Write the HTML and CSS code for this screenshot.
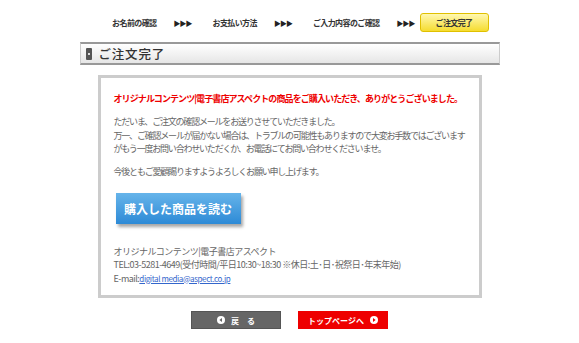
FILE: index.html
```html
<!DOCTYPE html>
<html lang="ja">

<head>
    <meta charset="UTF-8">
    <title>ご注文完了</title>
    <link rel="stylesheet" href="styles.css">
</head>

<body>
    <div class="page">
        <!-- ステップ表示 -->
        <div class="steps">
            <span class="step">お名前の確認</span>
            <span class="arrow">▶▶▶</span>
            <span class="step">お支払い方法</span>
            <span class="arrow">▶▶▶</span>
            <span class="step">ご入力内容のご確認</span>
            <span class="arrow last">▶▶▶</span>
            <span class="step current">ご注文完了</span>
        </div>

        <h1 class="title"><span class="mark"></span>ご注文完了</h1>

        <div class="box">
            <p class="thanks">オリジナルコンテンツ|電子書店アスペクトの商品をご購入いただき、ありがとうございました。</p>
            <p class="text">ただいま、ご注文の確認メールをお送りさせていただきました。<br>
                万一、ご確認メールが届かない場合は、トラブルの可能性もありますので大変お手数ではございます<br>
                がもう一度お問い合わせいただくか、お電話にてお問い合わせくださいませ。</p>
            <p class="text">今後ともご愛顧賜りますようよろしくお願い申し上げます。</p>
            <a class="read-btn" href="#">購入した商品を読む</a>
            <p class="text contact">オリジナルコンテンツ|電子書店アスペクト<br>
                TEL:03-5281-4649(受付時間/平日10:30~18:30 ※休日:土･日･祝祭日･年末年始)<br>
                E-mail:<a href="#">digital media@aspect.co.jp</a></p>
        </div>

        <div class="buttons">
            <a class="btn back" href="#">
                <svg width="8" height="8" viewBox="0 0 8 8"><circle cx="4" cy="4" r="4" fill="#fff"/><path d="M5 2 L2.4 4 L5 6 Z" fill="#666"/></svg>
                <span>戻　る</span>
            </a>
            <a class="btn top" href="#">
                <span>トップページへ</span>
                <svg width="8" height="8" viewBox="0 0 8 8"><circle cx="4" cy="4" r="4" fill="#fff"/><path d="M3 2 L5.6 4 L3 6 Z" fill="#e00"/></svg>
            </a>
        </div>
    </div>
</body>

</html>
```

FILE: styles.css
```css
body {
    margin: 0;
    background-color: #fff;
    font-family: "Noto Sans CJK JP", "Liberation Sans", sans-serif;
    color: #666;
}

.page {
    width: 420px;
    margin: 0 auto;
}

/* ステップ */
.steps {
    display: flex;
    align-items: center;
    justify-content: flex-end;
    margin-top: 13px;
    padding-right: 11px;
    height: 19px;
    font-size: 8px;
    letter-spacing: -0.6px;
    font-weight: bold;
    color: #333;
}

.arrow {
    margin: 0 21px 0 17px;
    font-size: 7px;
    letter-spacing: -1px;
    color: #222;
}

.arrow.last {
    margin-right: 5px;
}

.step.current {
    width: 69px;
    height: 19px;
    line-height: 18px;
    text-align: center;
    border: 1px solid #e0c000;
    border-radius: 3px;
    box-sizing: border-box;
    background: linear-gradient(#fff8b0, #f5dc30);
}

/* タイトル */
.title {
    display: flex;
    align-items: center;
    height: 19px;
    margin: 10px 0 0;
    padding-left: 5px;
    border: 1px solid #ccc;
    border-top: 2px solid #999;
    border-bottom: 2px solid #999;
    background: linear-gradient(#fff, #e6e6e6);
    font-size: 12.5px;
    font-weight: 500;
    letter-spacing: 0.8px;
    color: #333;
}

.mark {
    width: 6px;
    height: 12px;
    margin-right: 7px;
    border-radius: 1px;
    background: radial-gradient(circle, #ddd 0 1px, #555 1.5px);
}

/* 本文 */
.box {
    margin: 10px 18px 0;
    padding: 14px 13px 10px;
    border: 3px solid #ccc;
    font-size: 9px;
    letter-spacing: -1.2px;
    line-height: 13.5px;
}

.box p {
    margin: 0;
}

.thanks {
    font-weight: bold;
    letter-spacing: -0.9px;
    white-space: nowrap;
    color: #e00;
    margin-bottom: 9.5px !important;
}

.text {
    margin-bottom: 9.5px !important;
}

.read-btn {
    display: block;
    width: 125px;
    height: 31px;
    line-height: 31px;
    margin: 14px 0 21px 2px;
    text-align: center;
    text-decoration: none;
    font-size: 12px;
    letter-spacing: 0;
    font-weight: bold;
    color: #fff;
    background: linear-gradient(#66b4ea, #2d8ad6);
    box-shadow: 2px 3px 3px rgba(0, 0, 0, .35);
}

.contact {
    margin-bottom: 0 !important;
    letter-spacing: -0.5px;
}

.contact a {
    font-size: 8px;
    color: #36c;
    letter-spacing: -0.4px;
}

/* ボタン */
.buttons {
    display: flex;
    justify-content: center;
    gap: 17px;
    margin-top: 13px;
}

.btn {
    display: flex;
    align-items: center;
    justify-content: center;
    gap: 6px;
    width: 90px;
    height: 18px;
    box-sizing: border-box;
    font-size: 8px;
    font-weight: bold;
    color: #fff;
    text-decoration: none;
}

.btn.back {
    background-color: #666;
    border: 1px solid #555;
}

.btn.top {
    background-color: #e00;
}
```
